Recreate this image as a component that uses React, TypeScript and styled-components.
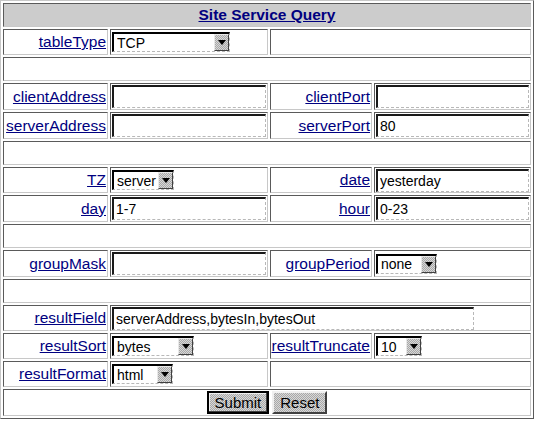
import React from "react";
import styled, { createGlobalStyle } from "styled-components";

const GlobalStyle = createGlobalStyle`
  body {
    margin: 0;
    background: #ffffff;
    font-family: "Liberation Sans", Arial, sans-serif;
  }
`;

const DITHER = "repeating-conic-gradient(#a8a8a8 0 25%, #d8d8d8 0 50%) 0 0 / 2px 2px";

const QueryForm = styled.form`
  display: grid;
  grid-template-columns: 105px 158px 102px 157px;
  gap: 2px;
  padding: 2px;
  width: 534px;
  box-sizing: border-box;
  border: 1px solid;
  border-color: #c8c8c8 #5a5a5a #5a5a5a #c8c8c8;
`;

const Cell = styled.div<{ $span?: number; $align?: "start" | "center" | "end"; $h?: number; $head?: boolean }>`
  grid-column: span ${(p) => p.$span ?? 1};
  display: flex;
  align-items: center;
  justify-content: ${(p) => (p.$align === "start" ? "flex-start" : p.$align === "center" ? "center" : "flex-end")};
  box-sizing: border-box;
  height: ${(p) => p.$h ?? 26}px;
  padding: 1px;
  border: 1px solid;
  border-color: #5a5a5a #c8c8c8 #c8c8c8 #5a5a5a;
  background: ${(p) => (p.$head ? "#cccccc" : "#ffffff")};
  gap: 3px;
`;

const FieldLink = styled.a`
  color: #000080;
  font-size: 15.5px;
  text-decoration: underline;
  white-space: nowrap;
  line-height: 18px;
`;

const Title = styled.a`
  color: #000080;
  font-size: 15.5px;
  font-weight: bold;
  text-decoration: underline;
`;

const TextInput = styled.input<{ $w?: number }>`
  width: ${(p) => (p.$w ? `${p.$w}px` : "100%")};
  height: 23px;
  box-sizing: border-box;
  margin: 0;
  padding: 0 0 0 2px;
  font-family: "Liberation Sans", Arial, sans-serif;
  font-size: 14px;
  color: #000;
  background: #fff;
  border-style: solid dashed dashed solid;
  border-width: 2px 1px 1px 2px;
  border-color: #1a1a1a #b8b8b8 #b8b8b8 #1a1a1a;
  outline: none;
`;

const SelectBox = styled.span<{ $w: number }>`
  display: inline-flex;
  align-items: stretch;
  width: ${(p) => p.$w}px;
  height: 20px;
  box-sizing: border-box;
  border-style: solid dashed dashed solid;
  border-width: 2px 1px 1px 2px;
  border-color: #000 #b8b8b8 #b8b8b8 #000;
  background: #fff;
`;

const NativeSelect = styled.select`
  appearance: none;
  flex: 1;
  min-width: 0;
  border: none;
  margin: 0;
  padding: 0 0 0 3px;
  background: transparent;
  font-family: "Liberation Sans", Arial, sans-serif;
  font-size: 14px;
  color: #000;
  outline: none;
`;

const DropArrow = styled.span`
  width: 15px;
  box-sizing: border-box;
  display: flex;
  align-items: center;
  justify-content: center;
  background: ${DITHER};
  border: 1px solid;
  border-color: #e8e8e8 #404040 #404040 #e8e8e8;

  &::after {
    content: "";
    border-left: 4px solid transparent;
    border-right: 4px solid transparent;
    border-top: 5px solid #000;
  }
`;

const Button = styled.button<{ $default?: boolean }>`
  height: 23px;
  margin: 0;
  padding: 0 6px;
  font-family: "Liberation Sans", Arial, sans-serif;
  font-size: 15px;
  color: #000;
  background: ${DITHER};
  border: 2px solid;
  border-color: ${(p) => (p.$default ? "#000" : "#f0f0f0 #404040 #404040 #f0f0f0")};
  box-shadow: ${(p) => (p.$default ? "inset -1px -1px 0 #404040, inset 1px 1px 0 #f0f0f0" : "none")};
`;

type Opt = { label: string; w: number; options: string[] };

const Select: React.FC<Opt> = ({ label, w, options }) => (
  <SelectBox $w={w}>
    <NativeSelect defaultValue={label}>
      {options.map((o) => (
        <option key={o}>{o}</option>
      ))}
    </NativeSelect>
    <DropArrow />
  </SelectBox>
);

const Label: React.FC<{ text: string; span?: number; h?: number }> = ({ text, span, h }) => (
  <Cell $span={span} $h={h}>
    <FieldLink href="#">{text}</FieldLink>
  </Cell>
);

const Spacer: React.FC = () => <Cell $span={4} $h={24} />;

export default function App() {
  return (
    <>
      <GlobalStyle />
      <QueryForm onSubmit={(e) => e.preventDefault()}>
        <Cell $span={4} $align="center" $h={24} $head>
          <Title href="#">Site Service Query</Title>
        </Cell>

        <Label text="tableType" />
        <Cell $align="start">
          <Select label="TCP" w={118} options={["TCP", "UDP", "HTTP"]} />
        </Cell>
        <Cell $span={2} />

        <Spacer />

        <Label text="clientAddress" h={27} />
        <Cell $h={27}>
          <TextInput />
        </Cell>
        <Label text="clientPort" h={27} />
        <Cell $h={27}>
          <TextInput />
        </Cell>

        <Label text="serverAddress" h={27} />
        <Cell $h={27}>
          <TextInput />
        </Cell>
        <Label text="serverPort" h={27} />
        <Cell $h={27}>
          <TextInput defaultValue="80" />
        </Cell>

        <Spacer />

        <Label text="TZ" />
        <Cell $align="start">
          <Select label="server" w={62} options={["server", "local", "GMT"]} />
        </Cell>
        <Label text="date" />
        <Cell>
          <TextInput defaultValue="yesterday" />
        </Cell>

        <Label text="day" h={27} />
        <Cell $h={27}>
          <TextInput defaultValue="1-7" />
        </Cell>
        <Label text="hour" h={27} />
        <Cell $h={27}>
          <TextInput defaultValue="0-23" />
        </Cell>

        <Spacer />

        <Label text="groupMask" h={27} />
        <Cell $h={27}>
          <TextInput />
        </Cell>
        <Label text="groupPeriod" h={27} />
        <Cell $h={27} $align="start">
          <Select label="none" w={61} options={["none", "hour", "day"]} />
        </Cell>

        <Spacer />

        <Label text="resultField" h={26} />
        <Cell $span={3} $align="start" $h={26}>
          <TextInput $w={362} defaultValue="serverAddress,bytesIn,bytesOut" />
        </Cell>

        <Label text="resultSort" />
        <Cell $align="start">
          <Select label="bytes" w={82} options={["bytes", "packets"]} />
        </Cell>
        <Label text="resultTruncate" />
        <Cell $align="start">
          <Select label="10" w={46} options={["10", "50", "100"]} />
        </Cell>

        <Label text="resultFormat" />
        <Cell $align="start">
          <Select label="html" w={61} options={["html", "text"]} />
        </Cell>
        <Cell $span={2} />

        <Cell $span={4} $align="center" $h={27}>
          <Button type="submit" $default>
            Submit
          </Button>
          <Button type="reset">Reset</Button>
        </Cell>
      </QueryForm>
    </>
  );
}
